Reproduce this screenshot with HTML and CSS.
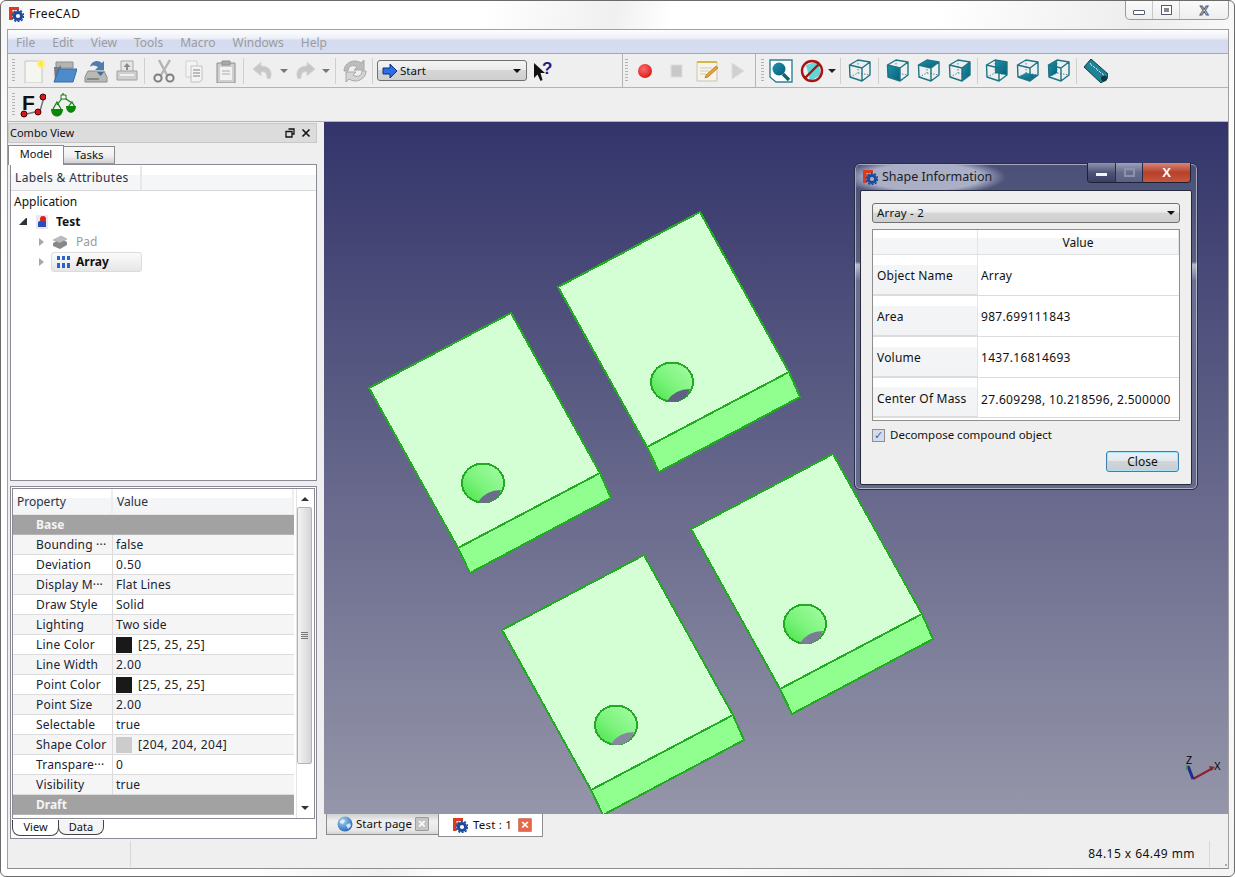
FILE: index.html
```html
<!DOCTYPE html>
<html lang="en">
<head>
<meta charset="utf-8">
<title>FreeCAD</title>
<link rel="stylesheet" href="styles.css">
</head>
<body>
<svg class="defs" width="0" height="0" aria-hidden="true">
  <defs>
    <linearGradient id="gTeal" x1="0" y1="0" x2="1" y2="1"><stop offset="0" stop-color="#1f93ad"/><stop offset="1" stop-color="#056077"/></linearGradient>
    <linearGradient id="gHole" x1="0" y1="1" x2="1" y2="0"><stop offset="0" stop-color="#48e048"/><stop offset=".45" stop-color="#7cf47c"/><stop offset="1" stop-color="#a8fca8"/></linearGradient>
    <radialGradient id="gRed" cx=".4" cy=".35" r=".7"><stop offset="0" stop-color="#ff6a6a"/><stop offset="1" stop-color="#d81818"/></radialGradient>
    <radialGradient id="gGlobe" cx=".35" cy=".3" r=".8"><stop offset="0" stop-color="#a8d4f6"/><stop offset="1" stop-color="#1a5fb0"/></radialGradient>
    <symbol id="fc" viewBox="0 0 16 16">
      <rect x="1" y="1" width="3.5" height="13" fill="#e03a1c"/><rect x="1" y="1" width="10" height="3" fill="#e03a1c"/><rect x="1" y="6" width="7" height="2.5" fill="#e03a1c"/>
      <circle cx="10" cy="10" r="3.6" fill="none" stroke="#1d4a9a" stroke-width="3"/><circle cx="10" cy="10" r="5.6" fill="none" stroke="#1d4a9a" stroke-width="1.6" stroke-dasharray="2 1.5"/>
    </symbol>
    <symbol id="cube" viewBox="0 0 24 24">
      <g fill="none" stroke="#1d7488" stroke-width="1.4" stroke-linejoin="round">
        <path d="M1.5 6 10 1l12 2-8 6zM1.5 6 14 9v13L2 18zM14 22l8-6V3"/>
        <path d="M10 1v13M2 18l8-4 12 2" stroke-dasharray="1.5 1.5" stroke-width=".8"/>
      </g>
    </symbol>
    <symbol id="i-new" viewBox="0 0 24 24"><path d="M3 2h17v22H3z" fill="#f6f6f0" stroke="#c4c4bc"/><circle cx="19" cy="5" r="4.6" fill="#fff27a" opacity=".6"/><circle cx="19" cy="5" r="2.6" fill="#ffe93a"/></symbol>
    <symbol id="i-open" viewBox="0 0 24 24"><path d="M3 3h17v6H3z" fill="#b4b4b4" stroke="#8e8e8e"/><path d="M1 8h5l2-2v17H2z" fill="#707a86"/><path d="M6 10h18l-4 13H1z" fill="#4c8ccb" stroke="#3a6c9f"/></symbol>
    <symbol id="i-save" viewBox="0 0 24 24"><path d="M4 12h16l3 6v5H1v-5z" fill="#b8b8b8" stroke="#8c8c8c"/><rect x="3" y="19" width="12" height="2" fill="#888"/><path d="M6 8c1-6 8-8 12-4l2-2v9h-9l3-3c-3-2-6-2-8 0z" fill="#4d7fae"/><path d="M13 13h7l-3.500 4z" fill="#3b6f9f"/></symbol>
    <symbol id="i-saveas" viewBox="0 0 24 24"><path d="M6 2h12v11H6z" fill="#e6e6e6" stroke="#a8a8a8"/><path d="M12 4l3.500 4H13v3h-2V8H8.500z" fill="#8a8a8a"/><path d="M2 12h20v9H2z" fill="#cfcfcf" stroke="#a0a0a0"/><rect x="5" y="15" width="14" height="2" fill="#f0f0f0"/></symbol>
    <symbol id="i-cut" viewBox="0 0 24 24"><path d="M7 1l8 15M18 1 9 16" stroke="#b4b4b4" stroke-width="2.400" fill="none"/><circle cx="6" cy="19" r="3.600" fill="none" stroke="#7e7e7e" stroke-width="2"/><circle cx="18" cy="19" r="3.600" fill="none" stroke="#7e7e7e" stroke-width="2"/></symbol>
    <symbol id="i-copy" viewBox="0 0 24 24"><path d="M3 2h11v16H3z" fill="#f4f4f4" stroke="#cfcfcf"/><path d="M8 7h11v14l-3 2H8z" fill="#f4f4f4" stroke="#c0c0c0"/><path d="M10 11h7M10 14h7M10 17h7" stroke="#a8a8a8" stroke-width="1.500"/></symbol>
    <symbol id="i-paste" viewBox="0 0 24 24"><path d="M3 4h18v20H3z" fill="#cfcfcf" stroke="#8e8e8e"/><path d="M6 8h12v13H6z" fill="#f2f2f2"/><path d="M8 2h8v4H8z" fill="#aaa" stroke="#8e8e8e"/><path d="M8 12h8M8 15h8" stroke="#c4c4c4" stroke-width="1.500"/></symbol>
    <symbol id="i-undo" viewBox="0 0 24 24"><path d="M10 3 2 10l8 7v-4c4-1 6 1 6 6l3 1c3-7 0-13-9-13z" fill="#c6c6c6" stroke="#d6d6d6"/></symbol>
    <symbol id="i-redo" viewBox="0 0 24 24"><path d="m14 3 8 7-8 7v-4c-4-1-6 1-6 6l-3 1C2 13 5 7 14 7z" fill="#c6c6c6" stroke="#d6d6d6"/></symbol>
    <symbol id="i-refresh" viewBox="0 0 24 24"><path d="M1 12C1 4 11-1 18 4l3-3v10H11l3-3c-4-3-9-1-9 4z" fill="#bcbcbc" stroke="#a8a8a8"/><path d="M23 12c0 8-10 13-17 8l-3 3V13h10l-3 3c4 3 9 1 9-4z" fill="#d4d4d4" stroke="#a8a8a8"/></symbol>
    <symbol id="i-start" viewBox="0 0 16 16"><path d="M1 5h7V1l7 7-7 7v-4H1z" fill="#2c6fe4" stroke="#0e2f80"/></symbol>
    <symbol id="i-what" viewBox="0 0 24 24"><path d="M3 4v15l3.500-3.500 3 6.500 2-1-2-7h4.500z" fill="#111"/><text x="11" y="15" class="what-q">?</text></symbol>
    <symbol id="i-rec" viewBox="0 0 24 24"><circle cx="12" cy="12" r="7" fill="url(#gRed)"/></symbol>
    <symbol id="i-stop" viewBox="0 0 24 24"><rect x="7" y="6" width="11" height="12" fill="#c8c8c8" stroke="#dedede"/></symbol>
    <symbol id="i-edit" viewBox="0 0 24 24"><path d="M2 3h20v19H2z" fill="#f6f4ea" stroke="#c8c4b4"/><path d="M2 2h20v2H2z" fill="#d8b648"/><path d="M5 9h12M5 12h9M5 15h6" stroke="#cfcbbc"/><path d="m10 19 1-3L21 7l2 2-10 9z" fill="#e8a030" stroke="#a06a1c" stroke-width=".6"/></symbol>
    <symbol id="i-play" viewBox="0 0 24 24"><path d="M6 4l12 8-12 8z" fill="#d0d0d0" stroke="#dedede"/></symbol>
    <symbol id="i-zoom" viewBox="0 0 24 24"><path d="M1 1h22v22H7l-6-5z" fill="#fff" stroke="#2e8296" stroke-width="1.400"/><circle cx="10" cy="10" r="6.500" fill="url(#gTeal)"/><path d="m14 15 6 6" stroke="#155f72" stroke-width="3.400"/></symbol>
    <symbol id="i-nodraw" viewBox="0 0 24 24"><path d="M6 6l12-4 3 14-11 6z" fill="#5fd8d8"/><path d="M14 9l5-6 1 1-5 6z" fill="#e8c040"/><circle cx="12" cy="12" r="10" fill="none" stroke="#a81414" stroke-width="2.400"/><path d="M5 19 19 5" stroke="#a81414" stroke-width="2.400"/></symbol>
    <symbol id="i-measure" viewBox="0 0 24 24"><path d="M0 8 7 0l17 15-1 5-6 4z" fill="#1f8398" stroke="#0f3a46"/><path d="M6 4l2 3M9 7l2 2M12 9l2 3M15 12l2 2M18 14l2 3" stroke="#bfe6ee"/><circle cx="20" cy="19.500" r="3" fill="#0f3a46"/></symbol>
    <symbol id="i-sketch" viewBox="0 0 26 26"><text x="2" y="18" class="sk-f">F</text><path d="M6 22l14-3 4-14" stroke="#777" stroke-width="1.500" fill="none"/><circle cx="4" cy="22" r="3" fill="#d81818" stroke="#400"/><circle cx="18" cy="20" r="3" fill="#d81818" stroke="#400"/><circle cx="23" cy="5" r="3" fill="#d81818" stroke="#400"/></symbol>
    <symbol id="i-scale" viewBox="0 0 26 26"><path d="M13 1v4M13 5 7 13M13 5l9 6M3 17l4-7 4 7M18 15l4-5 3 5" stroke="#0e7d0e" stroke-width="1.200" fill="none"/><path d="M11 3h5v4h-5z" fill="#fff" stroke="#0e7d0e"/><path d="M1 17h12c0 10-12 10-12 0zM16 14h10c0 9-10 9-10 0z" fill="#0a860a"/></symbol>
    <symbol id="i-doc" viewBox="0 0 16 16"><path d="M2 1h12v14H2z" fill="#e8e8ee"/><path d="M4 8l5-3 3 2v6H4z" fill="#2a4dbd"/><circle cx="9" cy="5" r="3" fill="#d82020"/></symbol>
    <symbol id="i-pad" viewBox="0 0 16 16"><path d="M1 9 9 5l6 3v3l-7 4-7-3z" fill="#888" /><path d="M1 6l8-4 6 3-7 4z" fill="#bcbcbc" stroke="#999" stroke-width=".5"/></symbol>
    <symbol id="i-array" viewBox="0 0 16 16"><path d="M2 2h3v4H2zM7 2h3v4H7zM12 2h3v4h-3zM2 9h3v5H2zM7 9h3v5H7zM12 9h3v5h-3z" fill="#2a62c8"/></symbol>
    <symbol id="i-globe" viewBox="0 0 16 16"><circle cx="8" cy="8" r="7.500" fill="url(#gGlobe)"/><path d="M3 5c2-2 4-2 5 0l-2 3-3-1zM9 9l4-2 1 3-3 3z" fill="#e9f2fb" opacity=".85"/></symbol>
    <symbol id="block" viewBox="0 0 300 300" overflow="visible">
      <g stroke="#22aa22" stroke-width="2" stroke-linejoin="round" class="jag">
        <path d="M9 88 151 13l89 160-142 75z" fill="#d4ffd4"/>
        <path d="m98 248 142-75 11 25-141 75z" fill="#90ff90"/>
        <ellipse cx="123" cy="183" rx="21" ry="19.500" fill="url(#gHole)"/>
      </g>
      <path d="M118 202q8-12 23-12-3 9-11 12-6 2-12 0z"/>
    </symbol>
  </defs>
</svg>

<div class="window">
  <header class="titlebar">
    <svg class="ico16"><use href="#fc"/></svg>
    <span class="title">FreeCAD</span>
    <div class="caption">
      <span class="cap cap-min"><i></i></span>
      <span class="cap cap-max"><i></i></span>
      <span class="cap cap-close">X</span>
    </div>
  </header>

  <div class="client">
    <nav class="menubar">
      <span>File</span><span>Edit</span><span>View</span><span>Tools</span><span>Macro</span><span>Windows</span><span>Help</span>
    </nav>

    <div class="toolrow">
      <div class="tb tb-file">
        <i class="grip"></i>
        <span class="tool"><svg class="ico"><use href="#i-new"/></svg></span>
        <span class="tool"><svg class="ico"><use href="#i-open"/></svg></span>
        <span class="tool"><svg class="ico"><use href="#i-save"/></svg></span>
        <span class="tool"><svg class="ico"><use href="#i-saveas"/></svg></span>
        <i class="sep"></i>
        <span class="tool"><svg class="ico"><use href="#i-cut"/></svg></span>
        <span class="tool"><svg class="ico"><use href="#i-copy"/></svg></span>
        <span class="tool"><svg class="ico"><use href="#i-paste"/></svg></span>
        <i class="sep"></i>
        <span class="tool"><svg class="ico"><use href="#i-undo"/></svg></span>
        <span class="drop drop-off"></span>
        <span class="tool"><svg class="ico"><use href="#i-redo"/></svg></span>
        <span class="drop drop-off"></span>
        <i class="sep sep-wide"></i>
        <span class="tool"><svg class="ico"><use href="#i-refresh"/></svg></span>
        <i class="sep sep-combo"></i>
        <div class="combo wb">
          <svg class="ico14"><use href="#i-start"/></svg>
          <span>Start</span>
          <b class="caret"></b>
        </div>
        <span class="tool"><svg class="ico"><use href="#i-what"/></svg></span>
      </div>
      <div class="tb tb-macro">
        <i class="grip"></i>
        <span class="tool"><svg class="ico"><use href="#i-rec"/></svg></span>
        <span class="tool"><svg class="ico"><use href="#i-stop"/></svg></span>
        <span class="tool"><svg class="ico"><use href="#i-edit"/></svg></span>
        <span class="tool"><svg class="ico"><use href="#i-play"/></svg></span>
      </div>
      <div class="tb tb-view">
        <i class="grip"></i>
        <span class="tool"><svg class="ico"><use href="#i-zoom"/></svg></span>
        <span class="tool"><svg class="ico"><use href="#i-nodraw"/></svg></span>
        <span class="drop"></span>
        <i class="sep sep-view"></i>
        <span class="tool"><svg class="ico" viewBox="0 0 24 24"><use href="#cube"/></svg></span>
        <i class="sep sep-view"></i>
        <span class="tool"><svg class="ico" viewBox="0 0 24 24"><path d="M1.500 6 14 9v13L2 18z" fill="url(#gTeal)"/><use href="#cube"/></svg></span>
        <span class="tool"><svg class="ico" viewBox="0 0 24 24"><path d="M1.500 6 10 1l12 2-8 6z" fill="url(#gTeal)"/><use href="#cube"/></svg></span>
        <span class="tool"><svg class="ico" viewBox="0 0 24 24"><path d="M14 9l8-6v13l-8 6z" fill="url(#gTeal)"/><use href="#cube"/></svg></span>
        <i class="sep sep-tight"></i>
        <span class="tool"><svg class="ico" viewBox="0 0 24 24"><path d="M10 1l12 2v13l-12-2z" fill="url(#gTeal)"/><use href="#cube"/></svg></span>
        <span class="tool"><svg class="ico" viewBox="0 0 24 24"><path d="M2 18l8-4 12 2-8 6z" fill="url(#gTeal)"/><use href="#cube"/></svg></span>
        <span class="tool"><svg class="ico" viewBox="0 0 24 24"><path d="M1.500 6 10 1v13l-8 4z" fill="url(#gTeal)"/><use href="#cube"/></svg></span>
        <i class="sep sep-tight"></i>
        <span class="tool"><svg class="ico"><use href="#i-measure"/></svg></span>
      </div>
    </div>

    <div class="toolrow toolrow-2">
      <i class="grip"></i>
      <span class="tool tool-sm"><svg class="ico26"><use href="#i-sketch"/></svg></span>
      <span class="tool tool-sm"><svg class="ico26"><use href="#i-scale"/></svg></span>
    </div>

    <main class="main">
      <aside class="dock">
        <div class="dock-title">
          <span>Combo View</span>
          <svg class="dock-btn" viewBox="0 0 10 10"><path d="M3.500 1h5.500v5H7M1 3.500h6V9H1z" fill="none" stroke="#111" stroke-width="1.300"/></svg>
          <svg class="dock-btn" viewBox="0 0 10 10"><path d="M1.500 1.500l7 7M8.500 1.500l-7 7" stroke="#111" stroke-width="1.600"/></svg>
        </div>
        <div class="dock-tabs">
          <span class="dtab dtab-on">Model</span>
          <span class="dtab">Tasks</span>
        </div>
        <section class="tree">
          <div class="tree-head"><span>Labels &amp; Attributes</span></div>
          <div class="tree-app">Application</div>
          <div class="tree-row tree-l1"><b class="tw tw-open"></b><svg class="ico16"><use href="#i-doc"/></svg><strong>Test</strong></div>
          <div class="tree-row tree-l2"><b class="tw"></b><svg class="ico16"><use href="#i-pad"/></svg><span class="muted">Pad</span></div>
          <div class="tree-row tree-l2"><b class="tw"></b><div class="tree-sel"><svg class="ico16"><use href="#i-array"/></svg><strong>Array</strong></div></div>
        </section>

        <section class="propframe">
          <div class="props">
            <div class="ptable">
              <div class="phead"><span>Property</span><span>Value</span></div>
              <div class="pgroup"><span>Base</span></div>
              <div class="prow alt"><span>Bounding ···</span><span>false</span></div>
              <div class="prow"><span>Deviation</span><span class="num">0.50</span></div>
              <div class="prow alt"><span>Display M···</span><span>Flat Lines</span></div>
              <div class="prow"><span>Draw Style</span><span>Solid</span></div>
              <div class="prow alt"><span>Lighting</span><span>Two side</span></div>
              <div class="prow"><span>Line Color</span><span class="num"><i class="swatch sw-dark"></i>[25, 25, 25]</span></div>
              <div class="prow alt"><span>Line Width</span><span class="num">2.00</span></div>
              <div class="prow"><span>Point Color</span><span class="num"><i class="swatch sw-dark"></i>[25, 25, 25]</span></div>
              <div class="prow alt"><span>Point Size</span><span class="num">2.00</span></div>
              <div class="prow"><span>Selectable</span><span>true</span></div>
              <div class="prow alt"><span>Shape Color</span><span class="num"><i class="swatch sw-light"></i>[204, 204, 204]</span></div>
              <div class="prow"><span>Transpare···</span><span>0</span></div>
              <div class="prow alt"><span>Visibility</span><span>true</span></div>
              <div class="pgroup"><span>Draft</span></div>
            </div>
            <div class="scroll">
              <b class="sb-up"></b>
              <div class="sb-thumb"><i></i></div>
              <b class="sb-down"></b>
            </div>
          </div>
        </section>
        <div class="ptabs">
          <span class="ptab ptab-on">View</span>
          <span class="ptab">Data</span>
        </div>
      </aside>

      <div class="center">
        <div class="viewport">
          <svg class="scene" viewBox="324 122 903 692" preserveAspectRatio="none">
            <use href="#block" x="360" y="300" width="300" height="300" fill="#6b6c8c"/>
            <use href="#block" x="549" y="199" width="300" height="300" fill="#5f6082"/>
            <use href="#block" x="493" y="542" width="300" height="300" fill="#87889f"/>
            <use href="#block" x="682" y="441" width="300" height="300" fill="#7b7c96"/>
            <g class="gizmo">
              <path d="M1193 779l20-11" stroke="#8c2030" stroke-width="2"/>
              <path d="M1209 766l6 1-4 4z" fill="#8c2030"/>
              <path d="M1193 779l-5-13" stroke="#1c2c90" stroke-width="3"/>
              <path d="M1187 765v5" stroke="#2a9a2a" stroke-width="1.500"/>
              <text x="1214" y="770">X</text>
              <text x="1186" y="764">Z</text>
            </g>
          </svg>

          <div class="dialog">
            <div class="dlg-title">
              <svg class="ico16"><use href="#fc"/></svg>
              <span>Shape Information</span>
              <div class="dlg-caps">
                <span class="dcap dcap-min"><i></i></span>
                <span class="dcap dcap-max"><i></i></span>
                <span class="dcap dcap-close">X</span>
              </div>
            </div>
            <div class="dlg-body">
              <div class="combo dlg-combo"><span>Array - 2</span><b class="caret"></b></div>
              <div class="itable">
                <div class="ihead"><span></span><span>Value</span></div>
                <div class="irow"><span>Object Name</span><span>Array</span></div>
                <div class="irow"><span>Area</span><span class="num-sm">987.699111843</span></div>
                <div class="irow"><span>Volume</span><span class="num-sm">1437.16814693</span></div>
                <div class="irow"><span>Center Of Mass</span><span class="num-sm">27.609298, 10.218596, 2.500000</span></div>
              </div>
              <label class="check"><i class="box">✓</i><span>Decompose compound object</span></label>
              <div class="dlg-actions"><span class="btn">Close</span></div>
            </div>
          </div>
        </div>

        <div class="doc-tabs">
          <div class="doc-tab"><svg class="ico14"><use href="#i-globe"/></svg><span>Start page</span><b class="x x-off">×</b></div>
          <div class="doc-tab doc-tab-on"><svg class="ico16"><use href="#fc"/></svg><span>Test : 1</span><b class="x x-on">×</b></div>
        </div>
      </div>
    </main>

    <footer class="statusbar">
      <i class="st-cell"></i>
      <span class="st-text">84.15 x 64.49 mm</span>
      <i class="st-grip"></i>
    </footer>
  </div>
</div>
</body>
</html>
```
FILE: styles.css
```css
* { box-sizing: border-box; }
html, body { margin: 0; padding: 0; width: 1235px; height: 877px; overflow: hidden; background: #fff; }
body { font: 12px/16px "Noto Sans", "Liberation Sans", sans-serif; color: #111; }
i, b { display: block; font-style: normal; }
.defs { position: absolute; }
.what-q { font: 900 17px "Liberation Sans", sans-serif; fill: #16208c; }
.sk-f { font: 900 21px "Liberation Sans", sans-serif; fill: #111; }
.jag { shape-rendering: crispEdges; }

.ico { width: 24px; height: 24px; display: block; overflow: visible; }
.ico14 { width: 16px; height: 16px; display: block; flex: none; }
.ico16 { width: 16px; height: 16px; display: block; flex: none; }
.ico26 { width: 26px; height: 26px; display: block; overflow: visible; }

.window {
  width: 1235px; height: 877px; border: 1px solid #6b6b6b; border-radius: 6px;
  padding: 0 5px 7px 6px; display: flex; flex-direction: column;
  background: linear-gradient(105deg, #f6f6f6 0, #fff 5%, #fff 33%, #f0f0f0 42%, #fff 46%, #fff 64%, #ededed 78%, #fff 88%, #f4f4f4 100%);
}
.titlebar { height: 28px; flex: none; display: flex; align-items: center; gap: 5px; padding-left: 1px; }
.titlebar .ico16 { margin-top: -2px; }
.title { font-size: 12px; margin-top: -2px; letter-spacing: .4px; }
.caption { margin-left: auto; align-self: flex-start; height: 19px; display: flex; border: 1px solid #9a9a9a; border-top: 0; border-radius: 0 0 5px 5px; background: linear-gradient(#fafafa, #eee); }
.cap { display: flex; align-items: center; justify-content: center; height: 18px; border-right: 1px solid #c8c8c8; }
.cap-min { width: 27px; }
.cap-min i { width: 12px; height: 5px; margin-top: 5px; border: 1px solid #555c70; background: #fff; border-radius: 1px; }
.cap-max { width: 27px; }
.cap-max i { width: 11px; height: 10px; border: 1.500px solid #555c70; background: #fff; box-shadow: inset 0 0 0 2px #fff, inset 0 0 0 4px #888; }
.cap-close { width: 48px; border-right: 0; font: 700 13px "Liberation Sans", sans-serif; color: #eee; -webkit-text-stroke: 1px #555c70; }

.client { flex: 1; border: 1px solid #a0a0a0; border-bottom-color: #8e8e8e; background: #efefef; display: flex; flex-direction: column; min-height: 0; }

.menubar { height: 24px; flex: none; display: flex; gap: 17px; padding: 2px 0 0 8px; align-items: center; color: #9b9ba2; background: linear-gradient(#fdfdfe 0, #eef1f8 35%, #d5dcef 45%, #d7ddef 100%); border-bottom: 1px solid #a9a9a9; }

.toolrow { height: 34px; flex: none; display: flex; border-bottom: 1px solid #b4b4b4; background: #efefef; }
.toolrow-2 { align-items: center; padding-left: 4px; }
.tb { display: flex; align-items: center; height: 100%; padding-left: 4px; border-right: 1px solid #b4b4b4; }
.tb-file { width: 615px; }
.tb-macro { width: 133px; padding-left: 2px; }
.tb-view { border-right: 0; flex: 1; padding-left: 5px; }
.grip { width: 3px; height: 24px; margin-right: 3px; flex: none; background: repeating-linear-gradient(#9a9a9a 0 1px, transparent 1px 3px); opacity: .7; }
.tb-macro .grip { margin-right: 1px; }
.tb-view .grip { margin-right: 1px; }
.tool { width: 31px; height: 32px; flex: none; display: flex; align-items: center; justify-content: center; }
.tool-sm { width: 30px; }
.sep { width: 1px; height: 26px; background: #cfcfcf; flex: none; margin: 0 3px 0 2px; }
.sep-wide { margin-left: 4px; }
.sep-combo { margin-right: 4px; }
.sep-view { margin-left: 3px; }
.sep-tight { margin-left: 2px; }
.drop { width: 11px; flex: none; display: flex; justify-content: center; }
.drop::after { content: ""; border: 4px solid transparent; border-top: 4px solid #222; border-bottom: 0; }
.drop-off::after { border-top-color: #777; }
.tb-view .drop { width: 10px; }

.combo { display: flex; align-items: center; border: 1px solid #707070; border-radius: 3px; background: linear-gradient(#f4f4f4 0, #ebebeb 45%, #d6d6d6 50%, #cfcfcf 100%); }
.wb { width: 150px; height: 21px; gap: 2px; padding: 0 5px 0 4px; flex: none; font-size: 11.500px; }
.caret { margin-left: auto; border: 4px solid transparent; border-top: 4px solid #111; border-bottom: 0; }

.main { height: 718px; flex: none; display: flex; min-height: 0; }
.dock { width: 316px; flex: none; padding: 1px 7px 0 0; position: relative; }
.dock-title { height: 20px; background: #dcdcdc; border: 1px solid #c8c8c8; display: flex; align-items: center; gap: 6px; padding: 0 5px 0 1px; font-size: 11px; }
.dock-title span { margin-right: auto; }
.dock-btn { width: 10px; height: 10px; }
.dock-tabs { height: 21px; display: flex; align-items: flex-end; }
.dtab { height: 18px; width: 52px; display: flex; justify-content: center; align-items: center; padding-bottom: 1px; border: 1px solid #8a8a8a; border-bottom-color: #9a9a9a; margin-left: -1px; background: linear-gradient(#f8f8f8, #f0f0f0 55%, #d0d0d0); font-size: 11.500px; }
.dtab-on { margin-left: 0; width: 56px; height: 20px; padding-bottom: 3px; border-bottom: 0; background: #fff; position: relative; z-index: 1; margin-bottom: -1px; font-size: 11px; }

.tree { margin-left: 2px; height: 317px; border: 1px solid #8a8a96; background: #fff; }
.tree-head { height: 26px; display: flex; align-items: center; padding: 1px 0 0 4px; border-bottom: 1px solid #d8d8d8; background: linear-gradient(#fff 0, #fff 40%, #f4f6f8 40%, #f4f6f8 100%); color: #2a3444; letter-spacing: .35px; }
.tree-head span { width: 127px; border-right: 2px solid #e8e8e8; height: 100%; display: flex; align-items: center; }
.tree-app { padding-left: 3px; height: 20px; margin-top: 1px; display: flex; align-items: center; }
.tree-row { height: 20px; display: flex; align-items: center; }
.tree-row strong { font-weight: 700; }
.tree-l1 { padding-left: 8px; gap: 5px; }
.tree-l1 .ico16 { margin-left: 2px; }
.tree-l1 strong { margin-left: 1px; }
.tree-l2 { padding-left: 28px; }
.tree-l2 > .ico16 { margin: 0 5px 0 5px; }
.tree-l2 .muted { margin-left: 3px; }
.muted { color: #9b9b9b; }
.tw { width: 8px; height: 9px; flex: none; }
.tw::after { content: ""; display: block; border: 4.500px solid transparent; border-left: 5px solid #a8a8a8; border-right: 0; }
.tw-open::after { border: 0; border-bottom: 7px solid #333; border-left: 7px solid transparent; }
.tree-sel { width: 91px; height: 20px; margin-left: 4px; display: flex; align-items: center; gap: 5px; padding-left: 3px; border: 1px solid #dcdcdc; border-radius: 3px; background: linear-gradient(#fbfbfb, #e6e6e6); }

.propframe { margin: 5px 0 0 2px; height: 334px; border: 1px solid #8a8a96; border-bottom: 0; background: #fff; padding: 1px; }
.props { height: 100%; border: 1px solid #8a8a96; display: flex; }
.ptable { width: 281px; flex: none; overflow: hidden; }
.phead { height: 26px; display: grid; grid-template-columns: 100px 1fr; border-bottom: 1px solid #e6e6e6; background: linear-gradient(#fff 0, #fff 35%, #f3f5f7 35%); }
.phead span { padding: 1px 0 0 4px; border-right: 2px solid #eee; display: flex; align-items: center; color: #2a3444; }
.pgroup { height: 20px; background: #a2a2a2; color: #f4f4f4; font-weight: 700; padding-left: 23px; display: flex; align-items: center; box-shadow: inset 0 -1px 0 #b4b4b4; }
.prow { height: 20px; display: grid; grid-template-columns: 100px 1fr; color: #1a2230; letter-spacing: .2px; background: linear-gradient(90deg, #fff 0 20px, transparent 20px); }
.prow.alt { background: #f5f5f5; }
.prow span { display: flex; align-items: center; border-bottom: 1px solid #dcdcdc; }
.prow span:first-child { padding-left: 23px; border-right: 1px solid #dcdcdc; white-space: nowrap; }
.prow span:last-child { padding-left: 3px; }
.prow .num { letter-spacing: .45px; }
.swatch { width: 16px; height: 16px; margin-right: 6px; flex: none; }
.sw-dark { background: #191919; }
.sw-light { background: #cccccc; }
.scroll { width: 16px; margin-left: 2px; flex: none; display: flex; flex-direction: column; align-items: center; background: #fff; border-left: 1px solid #e4e4e4; }
.sb-up { margin: 8px 0 6px; border: 4px solid transparent; border-bottom: 4px solid #333; border-top: 0; }
.sb-thumb { width: 15px; height: 257px; border: 1px solid #b4b4b4; border-radius: 2px; background: linear-gradient(90deg, #f4f4f4, #d4d4d4); display: flex; align-items: center; justify-content: center; }
.sb-thumb i { width: 7px; height: 7px; background: repeating-linear-gradient(#777 0 1px, transparent 1px 2px); }
.sb-down { margin-top: auto; margin-bottom: 8px; border: 4px solid transparent; border-top: 4px solid #333; border-bottom: 0; }
.ptabs { display: flex; margin-left: 2px; height: 19px; background: #fff; border-right: 1px solid #8a8a96; border-left: 1px solid #8a8a96; border-bottom: 1px solid #8a8a96; padding-left: 1px; }
.ptab { height: 15px; width: 46px; font-size: 11px; line-height: 14px; text-align: center; border: 1px solid #444; border-top: 0; border-radius: 0 0 8px 8px; margin-right: -1px; background: #f4f4f4; }
.ptab-on { background: #fff; width: 47px; height: 16px; }

.center { flex: 1; display: flex; flex-direction: column; min-width: 0; }
.viewport { height: 692px; flex: none; position: relative; background: linear-gradient(#33346a 0, #9596a9 100%); overflow: hidden; }
.scene { display: block; width: 903px; height: 692px; }
.gizmo text { font: 10px "Liberation Sans", sans-serif; fill: #000; }

.dialog { position: absolute; left: 530px; top: 41px; width: 344px; height: 327px; border: 1px solid #2a2d48; border-radius: 6px; padding: 0 5px 5px; background: linear-gradient(#4a5078 0, #59607f 30%, #b8bccc 31%, #6a7092 36%, #646a8c 100%); box-shadow: 0 0 0 1px rgba(255,255,255,.5) inset; }
.dlg-title { height: 26px; display: flex; align-items: center; gap: 4px; position: relative; color: #1c1c24; background: radial-gradient(ellipse 82px 19px at 68px 13px, rgba(178,183,205,.92) 70%, rgba(178,183,205,0) 100%); margin: 0 -4px; padding-left: 6px; }
.dlg-title > span { font-size: 12.500px; }
.dlg-caps { position: absolute; right: 5px; top: -1px; height: 20px; display: flex; border: 1px solid #1e2036; border-top: 0; border-radius: 0 0 4px 4px; overflow: hidden; }
.dcap { height: 19px; display: flex; align-items: center; justify-content: center; border-right: 1px solid #2a2d48; }
.dcap-min { width: 28px; background: linear-gradient(#8e94ac, #4e5476 50%, #3a4064); }
.dcap-min i { width: 11px; height: 3px; background: #f4f4f4; margin-top: 4px; }
.dcap-max { width: 27px; background: linear-gradient(#9ca2b8, #666c8c 50%, #5a6084); }
.dcap-max i { width: 11px; height: 9px; border: 2px solid #8c92aa; }
.dcap-close { width: 47px; border: 0; background: linear-gradient(#d88676, #b8412c 50%, #c8553a); color: #fff; font: 700 13px "Liberation Sans", sans-serif; }
.dlg-body { height: 295px; border: 1px solid #26283c; border-radius: 2px; background: #efefef; padding: 12px 11px 0 11px; }
.dlg-combo { height: 20px; width: 308px; padding: 0 4px; font-size: 11.500px; letter-spacing: .2px; }
.itable { margin-top: 6px; width: 308px; height: 192px; border: 1px solid #8e8e8e; background: #fff; }
.ihead { height: 25px; display: grid; grid-template-columns: 105px 1fr; border-bottom: 1px solid #e0e0e0; background: linear-gradient(#fff 0, #fff 35%, #f3f5f7 35%); }
.ihead span { display: flex; align-items: center; justify-content: center; padding-top: 2px; border-right: 1px solid #e4e4e4; }
.irow { height: 41px; display: grid; grid-template-columns: 105px 1fr; letter-spacing: .2px; }
.irow span { display: flex; align-items: center; padding: 2px 0 0 3px; border-bottom: 1px solid #dcdcdc; }
.irow span:first-child { padding-left: 4px; background: linear-gradient(#fff 0, #fff 25%, #f3f5f7 25%, #f1f3f5 100%); border-bottom: 2px solid #dcdcdc; border-right: 1px solid #e4e4e4; }
.irow .num-sm { letter-spacing: .32px; }
.irow:last-child { height: 40px; }
.irow:last-child span { padding-top: 4px; }
.check { display: flex; align-items: center; gap: 5px; margin-top: 7px; height: 14px; font-size: 11.500px; }
.box { width: 13px; height: 13px; border: 1px solid #8e8e8e; background: #d4dcec; color: #3a60b0; font: 700 11px/11px "DejaVu Sans", sans-serif; text-align: center; }
.dlg-actions { display: flex; justify-content: flex-end; margin-top: 9px; padding-right: 1px; }
.btn { width: 73px; height: 21px; display: flex; align-items: center; justify-content: center; border: 1px solid #3c7fb1; border-radius: 3px; background: linear-gradient(#e8f2f8, #e4e8ea 45%, #cfd4d8 50%, #c8ced2); box-shadow: inset 0 0 0 1px #a6e2f8; }

.doc-tabs { height: 26px; display: flex; padding-left: 2px; align-items: flex-start; }
.doc-tab { height: 21px; width: 113px; display: flex; align-items: center; gap: 3px; padding-left: 10px; border: 1px solid #8e8e8e; border-top: 0; background: linear-gradient(#cfcfcf, #f0f0f0 35%, #e8e8e8 80%, #d4d4d4); }
.doc-tab span { font-size: 11.500px; }
.doc-tab-on { height: 23px; width: 105px; margin-left: -1px; background: #fff; padding-left: 13px; }
.doc-tab-on span { margin: 0 3px 0 2px; letter-spacing: .2px; }
.x { width: 14px; height: 14px; flex: none; font: 700 13px/12px "Liberation Sans", sans-serif; color: #fff; text-align: center; border-radius: 1px; }
.x-off { background: #c4c4c4; border: 1px solid #9c9c9c; }
.x-on { background: #e4694c; border: 1px solid #d08670; }

.statusbar { flex: 1; display: flex; align-items: center; background: #efefef; }
.st-cell { width: 123px; height: 26px; border-right: 1px solid #d8d8d8; }
.st-text { margin-left: auto; margin-right: 14px; letter-spacing: .45px; }
.st-grip { width: 19px; height: 26px; border-left: 1px solid #d8d8d8; background: radial-gradient(circle at 1px 1px, #a8a8a8 1px, transparent 1.200px) right 0 bottom 0 / 3px 3px no-repeat; }
```
